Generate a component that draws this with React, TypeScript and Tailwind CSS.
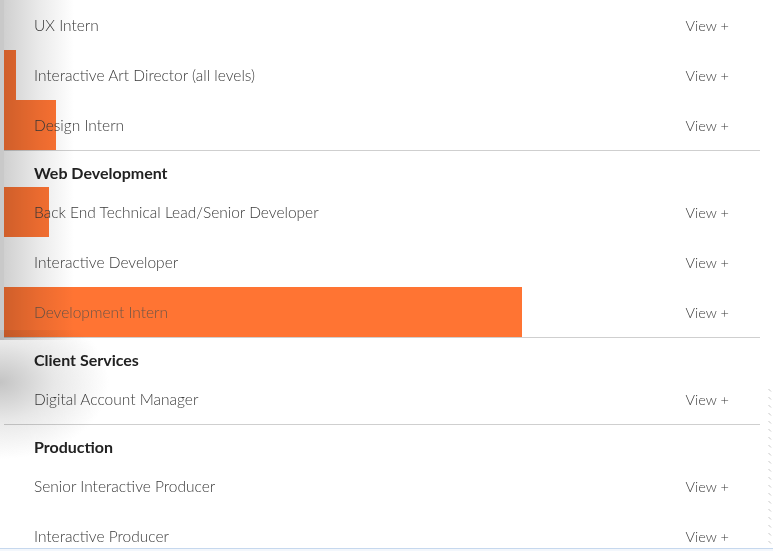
import React from "react";

type Item = { title: string; orange?: number };

const Row = ({ title, orange }: Item) => (
  <div className="relative flex h-[50px] items-center justify-between pl-[30px] pr-[31px] pt-[2px]">
    {orange ? (
      <div className="absolute left-0 top-0 h-full bg-[#ff7433]" style={{ width: orange }} />
    ) : null}
    <span className={"relative text-[15.5px] font-light " + (orange && orange > 60 ? "text-[#6b5548]" : "text-[#3a3a3a]")}>{title}</span>
    <span className="relative text-[14.5px] font-light text-[#3a3a3a]">View +</span>
  </div>
);

const Header = ({ title }: { title: string }) => (
  <div className="flex h-[36px] items-center pl-[30px] pt-[8px]">
    <span className="text-[16px] font-bold text-[#222]">{title}</span>
  </div>
);

const Divider = () => <div className="h-px bg-[#cfcfcf]" />;

export default function App() {
  return (
    <div className="relative h-[551px] w-[773px] overflow-hidden bg-white" style={{ fontFamily: "Lato, 'Open Sans', sans-serif" }}>
      <div className="ml-[4px] w-[756px]">
        <Row title="UX Intern" />
        <Row title="Interactive Art Director (all levels)" orange={12} />
        <Row title="Design Intern" orange={52} />
        <Divider />
        <Header title="Web Development" />
        <Row title="Back End Technical Lead/Senior Developer" orange={45} />
        <Row title="Interactive Developer" />
        <Row title="Development Intern" orange={518} />
        <Divider />
        <Header title="Client Services" />
        <Row title="Digital Account Manager" />
        <Divider />
        <Header title="Production" />
        <Row title="Senior Interactive Producer" />
        <Row title="Interactive Producer" />
      </div>

      {/* left shadow */}
      <div className="pointer-events-none absolute left-0 top-0 h-[340px] w-[4px] bg-[#c9c9c9]" />
      <div className="pointer-events-none absolute left-[4px] top-0 h-[340px] w-[70px] bg-gradient-to-r from-[#d0d0d0] via-[#eaeaea] to-white mix-blend-multiply" />
      <div className="pointer-events-none absolute left-0 top-[330px] h-[130px] w-[110px] bg-[radial-gradient(ellipse_at_0%_40%,#c4c4c4_0%,#e8e8e8_35%,rgba(255,255,255,0)_70%)] mix-blend-multiply" />

      {/* right ticks */}
      <svg className="pointer-events-none absolute right-0 top-[388px]" width="6" height="162">
        {Array.from({ length: 20 }).map((_, i) => (
          <line key={i} x1="1.5" y1={i * 8 + 1} x2="4" y2={i * 8 + 3.5} stroke="#c8c8c8" strokeWidth="1" />
        ))}
      </svg>

      {/* bottom line */}
      <div className="pointer-events-none absolute bottom-0 left-0 h-[3px] w-full border-t border-[#c6d8ee] bg-[#f3f7fc]" />
    </div>
  );
}
